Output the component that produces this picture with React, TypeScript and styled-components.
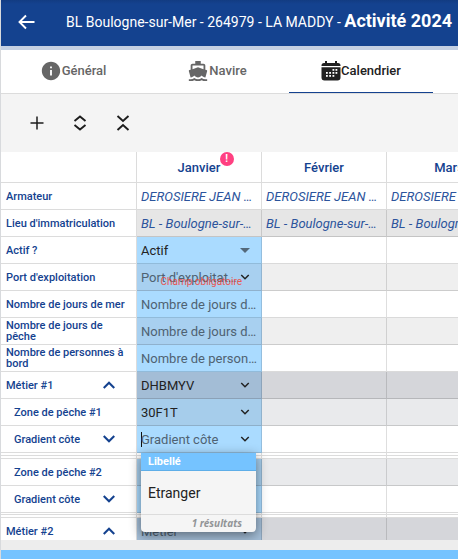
import React from "react";
import styled, { createGlobalStyle } from "styled-components";
import { MdInfo, MdDirectionsBoat } from "react-icons/md";

const GlobalStyle = createGlobalStyle`
  * { box-sizing: border-box; }
  body {
    margin: 0;
    font-family: Roboto, "Liberation Sans", sans-serif;
    background: #ededed;
    overflow: hidden;
  }
  button, input, select { font-family: inherit; }
`;

const navy = "#14428f";
const line = "#dcdcdc";

const Page = styled.div`
  display: flex;
  flex-direction: column;
  height: 100vh;
  border-left: 1px solid #d8dadd;
`;

const Header = styled.header`
  display: flex;
  align-items: center;
  flex: none;
  height: 50px;
  padding-left: 14px;
  background: linear-gradient(#123c82, ${navy} 4px);
  border-bottom: 4px solid #c4d0e3;
  color: #fff;
`;

const IconButton = styled.button`
  display: flex;
  align-items: center;
  justify-content: center;
  width: 24px;
  height: 24px;
  padding: 0;
  border: 0;
  background: none;
  color: inherit;
`;

const BackButton = styled(IconButton)`
  margin-bottom: 2px;
`;

const Title = styled.h1`
  margin: 0 0 4px 27px;
  font-size: 14px;
  font-weight: 400;
  line-height: 24px;
  white-space: nowrap;
`;

const TitleStrong = styled.strong`
  font-size: 18px;
  font-weight: 700;
`;

const Tabs = styled.nav`
  display: flex;
  flex: none;
  height: 44px;
  background: #fff;
  border-bottom: 1px solid ${line};
`;

const Tab = styled.a<{ $active?: boolean }>`
  display: flex;
  align-items: center;
  justify-content: center;
  width: 144px;
  border-bottom: 1px solid ${(p) => (p.$active ? navy : "transparent")};
  color: ${(p) => (p.$active ? "#212121" : "#666")};
  font-size: 13px;
  font-weight: 500;
  line-height: 20px;
  text-decoration: none;
`;

const Toolbar = styled.div`
  display: flex;
  align-items: center;
  flex: none;
  gap: 19px;
  height: 58px;
  padding-left: 24px;
  background: #f4f4f4;
  color: #1c1c1c;
`;

const Viewport = styled.main`
  flex: 1;
  min-height: 0;
  overflow: hidden;
`;

const Footer = styled.footer`
  flex: none;
  height: 19px;
  border-top: 10px solid #ededed;
  background: #75c3ff;
`;

const Table = styled.table`
  table-layout: fixed;
  width: 100%;
  min-width: 511px;
  border-collapse: separate;
  border-spacing: 0;
  background: #fff;
`;

const LabelCol = styled.col`
  width: 136px;
`;

const MonthHead = styled.th`
  height: 31px;
  padding: 0;
  border-right: 1px solid ${line};
  border-bottom: 1px solid ${line};
  color: ${navy};
  font-size: 13px;
  font-weight: 500;
`;

const MonthName = styled.span`
  position: relative;
`;

const Alert = styled.span`
  position: absolute;
  left: 42px;
  top: -8px;
  width: 14px;
  height: 14px;
  border-radius: 50%;
  background: #ff4081;
  color: #fff;
  font-size: 10px;
  font-weight: 700;
  line-height: 14px;
`;

const RowHead = styled.th<{ $nested?: boolean }>`
  height: 27px;
  padding: 0 8px 0 ${(p) => (p.$nested ? 13 : 5)}px;
  border-right: 1px solid ${line};
  border-bottom: 1px solid ${line};
  color: ${navy};
  font-size: 11px;
  font-weight: 500;
  line-height: 11px;
  text-align: left;
`;

const RowHeadContent = styled.div`
  display: flex;
  align-items: center;
  justify-content: space-between;
`;

const Toggle = styled(IconButton)`
  width: 22px;
  height: 20px;
  margin-right: 8px;
`;

type Tone = "plain" | "soft" | "zone" | "trade" | "place";

const tones: Record<Tone, [string, string]> = {
  plain: ["#fff", "#aadbff"],
  soft: ["#efefef", "#a8d0f0"],
  zone: ["#e9eaec", "#a6cdeb"],
  trade: ["#d5d6da", "#a3bdd6"],
  place: ["#e6e6e6", "#e6e6e6"],
};

const Cell = styled.td<{ $tone: Tone; $current?: boolean }>`
  position: relative;
  height: 27px;
  padding: 0 8px 0 4px;
  border-right: 1px solid rgba(0, 0, 0, 0.13);
  border-bottom: 1px solid rgba(0, 0, 0, 0.14);
  background: ${(p) => tones[p.$tone][p.$current ? 1 : 0]};
  color: #222;
  font-size: 13px;
`;

const ReadOnly = styled.div`
  overflow: hidden;
  color: #2c549c;
  font-style: italic;
  text-overflow: ellipsis;
  white-space: nowrap;
`;

const Field = styled.div`
  display: flex;
  align-items: center;
`;

const TextInput = styled.input<{ $wide?: boolean }>`
  flex: 1;
  min-width: 0;
  height: 24px;
  margin-right: ${(p) => (p.$wide ? -4 : 0)}px;
  padding: 0;
  border: 0;
  outline: 0;
  background: none;
  color: #222;
  font-size: 13px;
  text-overflow: ellipsis;
  &::placeholder {
    color: #4f6272;
    opacity: 1;
  }
`;

const FieldSelect = styled.select`
  flex: 1;
  min-width: 0;
  height: 24px;
  padding: 0;
  border: 0;
  outline: 0;
  appearance: none;
  background: none;
  color: #222;
  font-size: 13px;
`;

const Chevron = styled(IconButton)`
  flex: none;
  width: 16px;
  height: 16px;
`;

const Arrow = styled.svg`
  flex: none;
  width: 16px;
  height: 16px;
  color: #54697a;
`;

const FieldError = styled.span`
  position: absolute;
  right: 19px;
  bottom: 2px;
  color: #f44336;
  font-size: 10px;
  line-height: 12px;
  white-space: nowrap;
  opacity: 0.85;
`;

const Caret = styled.span`
  width: 1px;
  height: 15px;
  margin-right: -1px;
  background: #111;
`;

const GapCell = styled.td<{ $height: number }>`
  height: ${(p) => p.$height}px;
  padding: 0;
  border-right: 1px solid ${line};
  border-bottom: 1px solid ${line};
`;

const Menu = styled.div`
  position: absolute;
  z-index: 2;
  top: 27px;
  left: 4px;
  right: 5px;
  border-radius: 0 0 4px 4px;
  background: #f5f5f5;
  box-shadow: 0 3px 12px rgba(0, 0, 0, 0.45);
`;

const MenuHead = styled.div`
  height: 18px;
  padding-left: 7px;
  border-bottom: 1px solid #5eaee8;
  background: #75c3ff;
  color: #fff;
  font-size: 11px;
  font-weight: 700;
  line-height: 17px;
`;

const MenuOption = styled.button`
  display: block;
  width: 100%;
  height: 44px;
  padding: 0 7px;
  border: 0;
  border-bottom: 1px solid ${line};
  background: none;
  color: #222;
  font-size: 14px;
  text-align: left;
`;

const MenuFoot = styled.div`
  height: 17px;
  padding-right: 14px;
  color: #929497;
  font-family: "Noto Sans", sans-serif;
  font-size: 10px;
  font-style: italic;
  font-weight: 700;
  line-height: 17px;
  text-align: right;
`;

const ChevronIcon = ({ up, size = 12 }: { up?: boolean; size?: number }) => (
  <svg width={size} height={size} viewBox="0 0 12 12" fill="none" stroke="currentColor" strokeWidth="1.8">
    <path d={up ? "M1.5 8.5 6 4l4.5 4.5" : "M1.5 3.5 6 8l4.5-4.5"} />
  </svg>
);

const BackIcon = () => (
  <svg width="18" height="16" viewBox="0 0 18 16" fill="none" stroke="currentColor" strokeWidth="1.9">
    <path d="M8 1.500 1.500 8 8 14.500M1.500 8H16.500" />
  </svg>
);

const AddIcon = () => (
  <svg width="14" height="14" viewBox="0 0 14 14" stroke="currentColor" strokeWidth="1.5">
    <path d="M7 .5v13M.5 7h13" />
  </svg>
);

const ExpandIcon = () => (
  <svg width="14" height="16" viewBox="0 0 14 16" fill="none" stroke="currentColor" strokeWidth="1.9">
    <path d="M1.5 6 7 1.500 12.500 6M1.500 10 7 14.500 12.500 10" />
  </svg>
);

const CollapseIcon = () => (
  <svg width="14" height="16" viewBox="0 0 14 16" fill="none" stroke="currentColor" strokeWidth="1.9">
    <path d="M1.5 1 7 6 12.500 1M1.500 15 7 10 12.500 15" />
  </svg>
);

const ArrowIcon = () => (
  <Arrow viewBox="0 0 16 16" fill="currentColor" aria-hidden="true">
    <path d="M3 6h10l-5 5z" />
  </Arrow>
);

const dots = [
  [11.5, 9], [14.5, 9],
  [5, 12], [8.2, 12], [11.5, 12], [14.5, 12],
  [5, 15], [8.2, 15], [11.5, 15],
];

const CalendarIcon = () => (
  <svg width="20" height="20" viewBox="0 0 20 20" fill="currentColor">
    <path d="M4 0h2v2h8V0h2v2h1a2.500 2.500 0 0 1 2.500 2.500V5H.5v-.5A2.500 2.500 0 0 1 3 2h1z" />
    <path d="M.5 6.300h19v10.200a3 3 0 0 1-3 3h-13a3 3 0 0 1-3-3z" />
    {dots.map(([x, y]) => (
      <rect key={`${x}-${y}`} x={x} y={y - 1} width="1.8" height="1.8" fill="#fff" />
    ))}
  </svg>
);

const months = ["Janvier", "Février", "Mars"];

type RowProps = {
  label: string;
  tone: Tone;
  nested?: boolean;
  toggle?: "up" | "down";
  children?: React.ReactNode;
  text?: string;
};

const Row = ({ label, tone, nested, toggle, children, text }: RowProps) => (
  <tr>
    <RowHead scope="row" $nested={nested}>
      <RowHeadContent>
        {label}
        {toggle && (
          <Toggle type="button" aria-label={`Afficher ou masquer ${label}`}>
            <ChevronIcon up={toggle === "up"} size={14} />
          </Toggle>
        )}
      </RowHeadContent>
    </RowHead>
    {months.map((month, i) => (
      <Cell key={month} $tone={tone} $current={i === 0 && !text}>
        {text ? <ReadOnly>{text}</ReadOnly> : i === 0 && children}
      </Cell>
    ))}
  </tr>
);

type ComboProps = { label: string; value?: string; plain?: boolean; focused?: boolean };

const Combo = ({ label, value, plain, focused }: ComboProps) => (
  <Field>
    {focused && <Caret />}
    <TextInput aria-label={label} placeholder={label} defaultValue={value} $wide={plain} />
    {!plain && (
      <Chevron type="button" aria-label={`Choisir ${label}`}>
        <ChevronIcon size={10} />
      </Chevron>
    )}
  </Field>
);

const Gap = ({ height }: { height: number }) => (
  <tr aria-hidden="true">
    <GapCell $height={height} />
    {months.map((month) => (
      <GapCell key={month} $height={height} />
    ))}
  </tr>
);

export default function App() {
  return (
    <Page>
      <GlobalStyle />
      <Header>
        <BackButton type="button" aria-label="Retour">
          <BackIcon />
        </BackButton>
        <Title>
          BL Boulogne-sur-Mer - 264979 - LA MADDY - <TitleStrong>Activité 2024</TitleStrong>
        </Title>
      </Header>
      <Tabs>
        <Tab href="#general">
          <MdInfo size={22} />
          Général
        </Tab>
        <Tab href="#navire">
          <MdDirectionsBoat size={22} />
          Navire
        </Tab>
        <Tab href="#calendrier" $active>
          <CalendarIcon />
          Calendrier
        </Tab>
      </Tabs>
      <Toolbar>
        <IconButton type="button" aria-label="Ajouter">
          <AddIcon />
        </IconButton>
        <IconButton type="button" aria-label="Tout déplier">
          <ExpandIcon />
        </IconButton>
        <IconButton type="button" aria-label="Tout replier">
          <CollapseIcon />
        </IconButton>
      </Toolbar>
      <Viewport>
        <Table>
          <colgroup>
            <LabelCol />
            {months.map((month) => (
              <col key={month} />
            ))}
          </colgroup>
          <thead>
            <tr>
              <MonthHead as="td" />
              {months.map((month, i) => (
                <MonthHead key={month} scope="col">
                  <MonthName>
                    {month}
                    {i === 0 && <Alert>!</Alert>}
                  </MonthName>
                </MonthHead>
              ))}
            </tr>
          </thead>
          <tbody>
            <Row label="Armateur" tone="plain" text="DEROSIERE JEAN MARIE" />
            <Row label="Lieu d'immatriculation" tone="place" text="BL - Boulogne-sur-Mer" />
            <Row label="Actif ?" tone="plain">
              <Field>
                <FieldSelect aria-label="Actif ?" defaultValue="Actif">
                  <option>Actif</option>
                  <option>Inactif</option>
                </FieldSelect>
                <ArrowIcon />
              </Field>
            </Row>
            <Row label="Port d'exploitation" tone="soft">
              <Combo label="Port d'exploitation" />
              <FieldError>Champ obligatoire</FieldError>
            </Row>
            <Row label="Nombre de jours de mer" tone="plain">
              <Combo label="Nombre de jours de mer" plain />
            </Row>
            <Row label="Nombre de jours de pêche" tone="soft">
              <Combo label="Nombre de jours de pêche" plain />
            </Row>
            <Row label="Nombre de personnes à bord" tone="plain">
              <Combo label="Nombre de personnes à bord" plain />
            </Row>
            <Row label="Métier #1" tone="trade" toggle="up">
              <Combo label="Métier" value="DHBMYV" />
            </Row>
            <Row label="Zone de pêche #1" tone="zone" nested>
              <Combo label="Zone de pêche" value="30F1T" />
            </Row>
            <Row label="Gradient côte" tone="plain" nested toggle="down">
              <Combo label="Gradient côte" focused />
              <Menu>
                <MenuHead>Libellé</MenuHead>
                <MenuOption type="button">Etranger</MenuOption>
                <MenuFoot>1 résultats</MenuFoot>
              </Menu>
            </Row>
            <Gap height={3} />
            <Gap height={3} />
            <Row label="Zone de pêche #2" tone="zone" nested>
              <Combo label="Zone de pêche" />
            </Row>
            <Row label="Gradient côte" tone="plain" nested toggle="down">
              <Combo label="Gradient côte" />
            </Row>
            <Gap height={2} />
            <Gap height={3} />
            <Row label="Métier #2" tone="trade" toggle="up">
              <Combo label="Métier" />
            </Row>
          </tbody>
        </Table>
      </Viewport>
      <Footer />
    </Page>
  );
}
